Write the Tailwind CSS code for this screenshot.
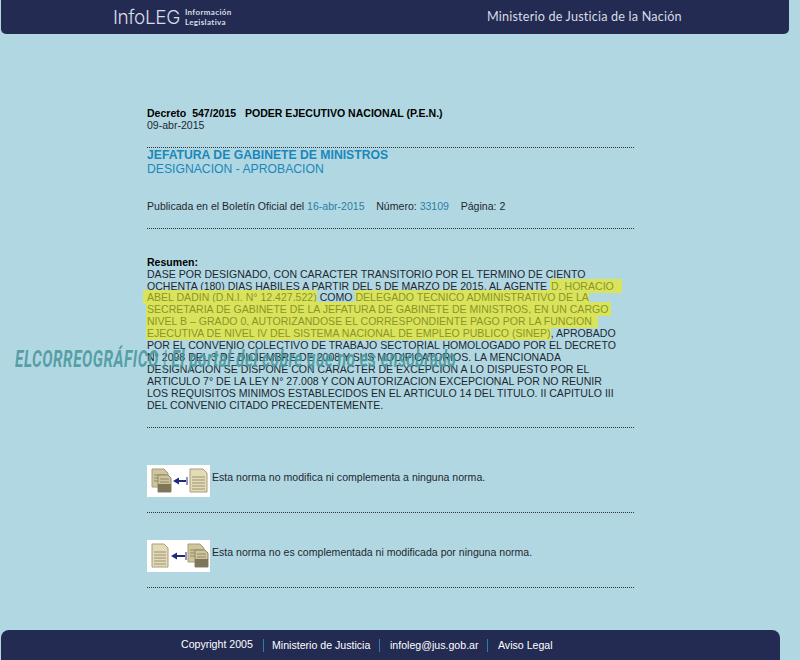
<!DOCTYPE html>
<html lang="es">
<head>
  <meta charset="UTF-8">
  <title>InfoLEG - Decreto 547/2015</title>
  <script src="https://cdn.jsdelivr.net/npm/@tailwindcss/browser@4"></script>
</head>
<body class="relative w-[800px] h-[660px] overflow-hidden bg-[#b1d8e2] font-['Liberation_Sans',Arial,sans-serif] text-[#1f2730]">

  <!-- cabecera -->
  <header class="ml-px w-[788px] h-[34px] bg-[#232b53] rounded-b-[5px] flex items-center text-[#d9dce4]">
    <div class="ml-[112px] flex items-center gap-[5px] w-[374px]">
      <span class="font-['Inter',sans-serif] font-light text-[19px] leading-none tracking-[-0.4px]">InfoLEG</span>
      <span class="font-['Lato',sans-serif] font-bold text-[8px] leading-[10px] tracking-[0.35px]">Información<br>Legislativa</span>
    </div>
    <span class="font-['Lato',sans-serif] text-[12.6px] tracking-[0.2px]">Ministerio de Justicia de la Nación</span>
  </header>

  <main class="ml-[147px] w-[487px] pt-[73px] text-[10.56px] leading-[11.9px]">
    <p class="pt-px font-bold text-black whitespace-pre">Decreto  547/2015   PODER EJECUTIVO NACIONAL (P.E.N.)</p>
    <p>09-abr-2015</p>

    <div class="mt-[15px] border-t border-dotted border-[#333]"></div>
    <h2 class="text-[12.2px] leading-[14px] font-bold text-[#1a87bb]">JEFATURA DE GABINETE DE MINISTROS</h2>
    <p class="text-[12.2px] leading-[14px] text-[#1a87bb]">DESIGNACION - APROBACION</p>

    <p class="mt-[25px] whitespace-pre">Publicada en el Boletín Oficial del <span class="text-[#2b7fa8]">16-abr-2015</span>    Número: <span class="text-[#2b7fa8]">33109</span>    Página: 2</p>

    <div class="mt-[15px] border-t border-dotted border-[#333]"></div>

    <div class="mt-[28px] whitespace-nowrap">
      <p class="font-bold text-black">Resumen:</p>
      <p>DASE POR DESIGNADO, CON CARACTER TRANSITORIO POR EL TERMINO DE CIENTO<br>
      OCHENTA (180) DIAS HABILES A PARTIR DEL 5 DE MARZO DE 2015, AL AGENTE <mark class="bg-[#d9e45c] text-[#8b9528] pl-[1px] pr-[8px] py-px">D. HORACIO</mark><br>
      <mark class="bg-[#d9e45c] text-[#8b9528] -ml-[4px] pl-[4px] py-px">ABEL DADIN (D.N.I. N° 12.427.522)</mark> COMO <mark class="bg-[#d9e45c] text-[#8b9528] py-px">DELEGADO TECNICO ADMINISTRATIVO DE LA</mark><br>
      <mark class="bg-[#d9e45c] text-[#8b9528] -ml-[1px] pl-[1px] pr-[3px] py-px">SECRETARIA DE GABINETE DE LA JEFATURA DE GABINETE DE MINISTROS, EN UN CARGO</mark><br>
      <mark class="bg-[#d9e45c] text-[#8b9528] -ml-[1px] pl-[1px] pr-[6px] py-px">NIVEL B – GRADO 0, AUTORIZANDOSE EL CORRESPONDIENTE PAGO POR LA FUNCION</mark><br>
      <mark class="bg-[#d9e45c] text-[#8b9528] -ml-[1px] pl-[1px] py-px">EJECUTIVA DE NIVEL IV DEL SISTEMA NACIONAL DE EMPLEO PUBLICO (SINEP)</mark>, APROBADO<br>
      POR EL CONVENIO COLECTIVO DE TRABAJO SECTORIAL HOMOLOGADO POR EL DECRETO<br>
      N° 2098 DEL 3 DE DICIEMBRE DE 2008 Y SUS MODIFICATORIOS. LA MENCIONADA<br>
      DESIGNACION SE DISPONE CON CARACTER DE EXCEPCION A LO DISPUESTO POR EL<br>
      ARTICULO 7° DE LA LEY N° 27.008 Y CON AUTORIZACION EXCEPCIONAL POR NO REUNIR<br>
      LOS REQUISITOS MINIMOS ESTABLECIDOS EN EL ARTICULO 14 DEL TITULO. II CAPITULO III<br>
      DEL CONVENIO CITADO PRECEDENTEMENTE.</p>
    </div>

    <div class="mt-[15px] border-t border-dotted border-[#333]"></div>

    <div class="mt-[37px] flex gap-[2px] h-[32px]">
      <svg class="w-[63px] h-[32px] bg-white" viewBox="0 0 63 32">
        <path d="M5 4h12l4 4v14H5z" fill="#cfc59c" stroke="#a89e78"/>
        <path d="M7 10h12M7 13h12M7 16h12" stroke="#8f8866"/>
        <path d="M11 10h10l3 3v14H11z" fill="#cfc59c" stroke="#8d8566"/>
        <path d="M11 19h13v8H11z" fill="#7d7659"/>
        <path d="M13 14h9M13 17h9" stroke="#8f8866"/>
        <path d="M26 16l6-3.5v2.500h7v2h-7v2.500z" fill="#1f2a80"/>
        <path d="M40 12v8" stroke="#1f2a80"/>
        <path d="M43 4h13l4 4v19H43z" fill="#e3dbb8" stroke="#a89e78"/>
        <path d="M45 12h13M45 15h13M45 18h13M45 21h13M45 24h13" stroke="#9a9270"/>
      </svg>
      <span class="mt-[7px]">Esta norma no modifica ni complementa a ninguna norma.</span>
    </div>

    <div class="mt-[15px] border-t border-dotted border-[#333]"></div>

    <div class="mt-[27px] flex gap-[2px] h-[32px]">
      <svg class="w-[63px] h-[32px] bg-white" viewBox="0 0 63 32">
        <path d="M5 4h12l4 4v19H5z" fill="#e3dbb8" stroke="#a89e78"/>
        <path d="M7 12h12M7 15h12M7 18h12M7 21h12M7 24h12" stroke="#9a9270"/>
        <path d="M24 16l6-3.500v2.500h8v2h-8v2.500z" fill="#1f2a80"/>
        <path d="M39 12v8" stroke="#1f2a80"/>
        <path d="M41 4h12l4 4v14H41z" fill="#cfc59c" stroke="#a89e78"/>
        <path d="M43 10h12M43 13h12M43 16h12" stroke="#8f8866"/>
        <path d="M48 10h10l3 3v14H48z" fill="#cfc59c" stroke="#8d8566"/>
        <path d="M48 19h13v8H48z" fill="#7d7659"/>
        <path d="M50 14h9M50 17h9" stroke="#8f8866"/>
      </svg>
      <span class="mt-[7px]">Esta norma no es complementada ni modificada por ninguna norma.</span>
    </div>

    <div class="mt-[15px] border-t border-dotted border-[#333]"></div>
  </main>

  <!-- marca de agua sobre el texto -->
  <div class="absolute left-[15px] top-[345px] origin-left scale-x-[0.64] whitespace-nowrap font-['Roboto',sans-serif] italic font-bold text-[24px] leading-[28px] tracking-[0.8px] text-[#4a979e]/90">ELCORREOGRÁFICO | El portal del cobre que no es ensobrado</div>

  <!-- pie -->
  <footer class="absolute left-px bottom-0 w-[779px] h-[30px] bg-[#232b53] rounded-t-[8px] flex items-center pl-[180px] text-white text-[10.6px]">
    <span class="w-[82px]">Copyright 2005</span>
    <span class="border-l border-[#2b7fa8] pl-[8px] w-[116px] leading-[13px]">Ministerio de Justicia</span>
    <span class="border-l border-[#2b7fa8] pl-[10px] w-[108px] leading-[13px]">infoleg@jus.gob.ar</span>
    <span class="border-l border-[#2b7fa8] pl-[10px] leading-[13px]">Aviso Legal</span>
  </footer>

</body>
</html>
